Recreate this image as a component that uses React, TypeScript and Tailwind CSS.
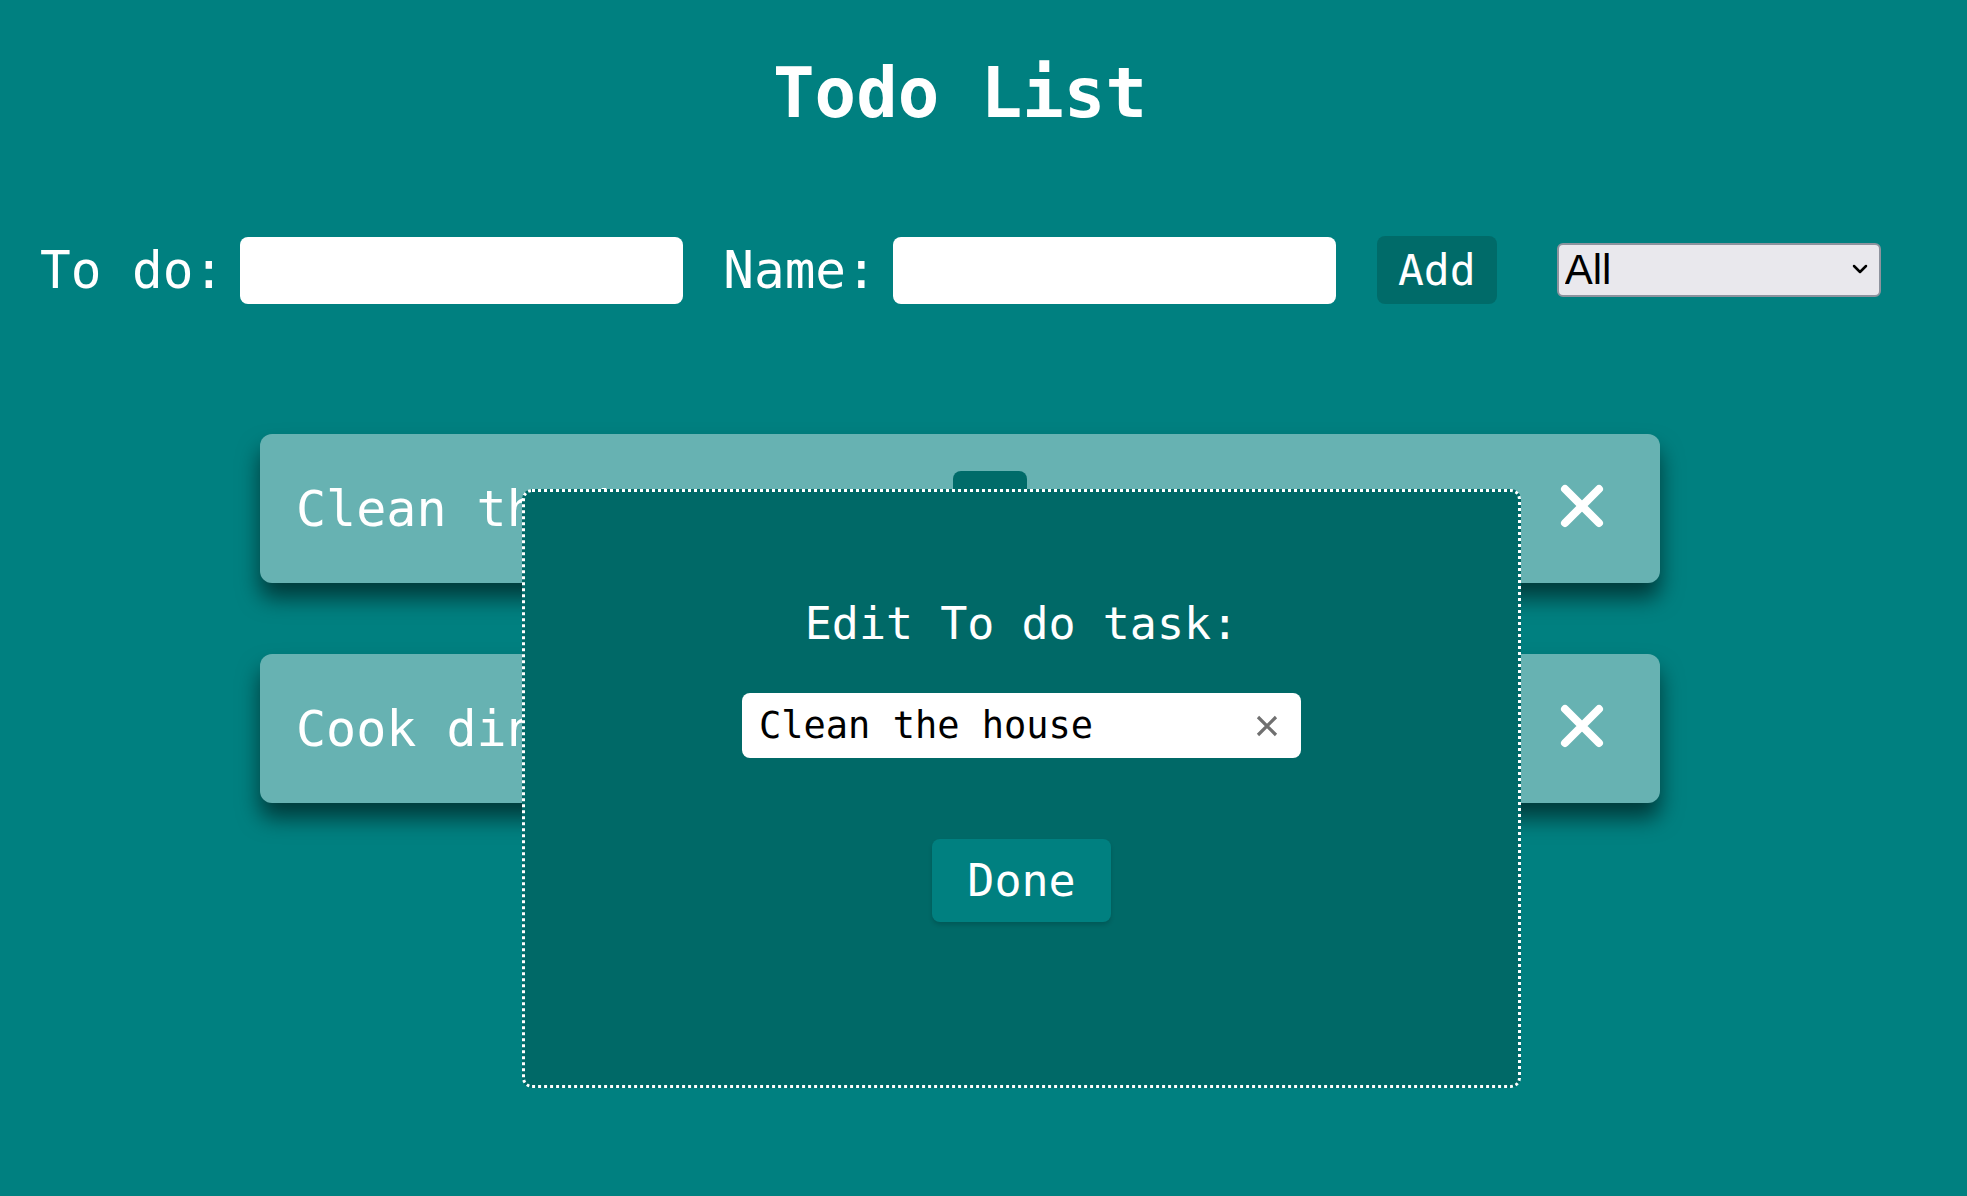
import { useState } from "react";

const todos = [
  { id: 1, text: "Clean the house" },
  { id: 2, text: "Cook dinner" },
];

function CloseIcon() {
  return (
    <svg width="46" height="46" viewBox="0 0 46 46" fill="none">
      <path d="M6 6 L40 40 M40 6 L6 40" stroke="white" strokeWidth="8" strokeLinecap="round" />
    </svg>
  );
}

export default function App() {
  const [task, setTask] = useState("Clean the house");
  const [filter, setFilter] = useState("all");

  return (
    <div className="min-h-screen w-full bg-[#008080] font-['DejaVu_Sans_Mono',monospace] text-white">
      <div className="relative w-[1920px] pt-[59px] pb-[200px]">
        <h1 className="text-center text-[69px] font-bold leading-none">Todo List</h1>

        <div className="mt-[108px] flex items-center pl-[40px]">
          <label className="mr-[16px] text-[51px] leading-none">To do:</label>
          <input type="text" className="h-[67px] w-[443px] rounded-lg bg-white px-4 text-[36px] text-black outline-none" />
          <label className="ml-[40px] mr-[16px] text-[51px] leading-none">Name:</label>
          <input type="text" className="h-[67px] w-[443px] rounded-lg bg-white px-4 text-[36px] text-black outline-none" />
          <button className="ml-[41px] flex h-[68px] w-[120px] items-center justify-center rounded-lg bg-[#006b69] text-[43px] leading-none text-white">
            Add
          </button>
          <div className="relative ml-[60px]">
            <select
              value={filter}
              onChange={(e) => setFilter(e.target.value)}
              className="h-[54px] w-[324px] appearance-none rounded-md border-2 border-[#8d939e] bg-[#e9e8ed] pl-[6px] font-['Liberation_Sans',Arial,sans-serif] text-[42px] leading-none text-black outline-none"
            >
              <option value="all">All</option>
              <option value="done">Done</option>
              <option value="todo">To do</option>
            </select>
            <svg className="pointer-events-none absolute right-[13px] top-[21px]" width="16" height="11" viewBox="0 0 16 11" fill="none">
              <path d="M2 2 L8 8 L14 2" stroke="black" strokeWidth="2.5" strokeLinecap="round" strokeLinejoin="round" />
            </svg>
          </div>
        </div>

        <ul className="mx-auto mt-[130px] flex w-[1400px] flex-col gap-[71px]">
          {todos.map((todo) => (
            <li
              key={todo.id}
              className="flex h-[149px] items-center rounded-xl bg-[#67b2b2] pl-[36px] shadow-[0_15px_22px_rgba(0,0,0,0.55)]"
            >
              <span className="w-[657px] text-[50px] leading-none whitespace-nowrap">{todo.text}</span>
              <button className="h-[75px] w-[74px] rounded-lg bg-[#006b69]" />
              <div className="flex-1" />
              <button className="mb-[6px] mr-[55px] flex h-[46px] w-[46px] items-center justify-center">
                <CloseIcon />
              </button>
            </li>
          ))}
        </ul>

        <div className="absolute left-[522px] top-[489px] flex h-[599px] w-[999px] flex-col items-center rounded-[10px] border-[3px] border-dotted border-white bg-[#006967] pt-[109px]">
          <h2 className="text-[45px] leading-none">Edit To do task:</h2>
          <div className="mt-[47px] flex h-[65px] w-[559px] items-center rounded-lg bg-white pl-[17px] pr-[22px]">
            <input
              type="text"
              value={task}
              onChange={(e) => setTask(e.target.value)}
              className="min-w-0 flex-1 bg-transparent text-[37px] leading-none text-black outline-none"
            />
            <svg width="24" height="22" viewBox="0 0 24 22" fill="none">
              <path d="M3 2 L21 20 M21 2 L3 20" stroke="#707070" strokeWidth="3.2" />
            </svg>
          </div>
          <button className="mt-[81px] flex h-[83px] w-[179px] items-center justify-center rounded-lg bg-[#008080] text-[45px] leading-none text-white shadow-[0_3px_4px_rgba(0,0,0,0.15)]">
            Done
          </button>
        </div>
      </div>
    </div>
  );
}
